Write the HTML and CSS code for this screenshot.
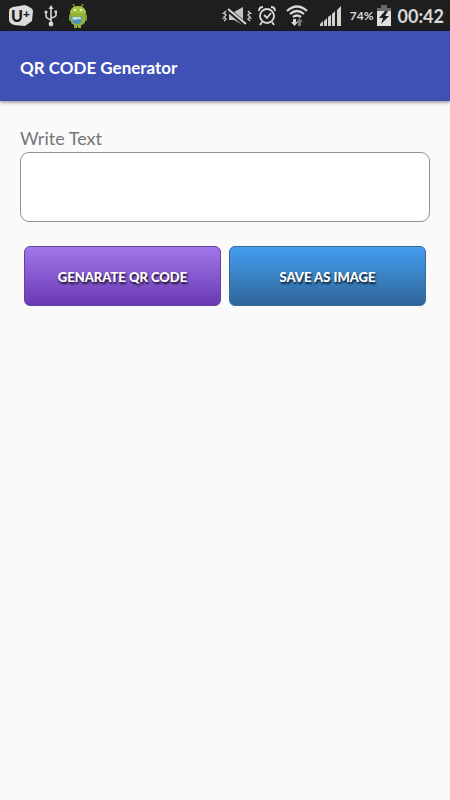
FILE: index.html
```html
<!DOCTYPE html>
<html lang="en">
<head>
<meta charset="utf-8">
<meta name="viewport" content="width=device-width, initial-scale=1">
<title>QR CODE Generator</title>
<link rel="stylesheet" href="styles.css">
</head>
<body>
<div class="status">
  <div class="status-group notices">
    <svg width="26" height="24" viewBox="0 0 26 24">
      <path d="M5 3L17 1Q25 4 25 7L24 17L17 22L6 21Q1 19 1 16L1 7Q1 4 5 3Z" fill="#dcdcda"/>
      <text x="3" y="18" class="logo">U<tspan dy="-4" class="logo-plus">+</tspan></text>
    </svg>
    <svg width="14" height="22" viewBox="0 0 14 22" fill="none" stroke="#d6d6d4" stroke-width="1.6">
      <path d="M7 3V19M2 7V11Q2 13 7 15M12 7V10Q12 12 7 13"/>
      <path d="M7 0L9.500 4H4.500ZM10.500 5.500H13V8H10.500Z" fill="#d6d6d4" stroke="none"/>
      <circle cx="2" cy="7" r="1.600" fill="#d6d6d4" stroke="none"/>
      <circle cx="7" cy="19" r="2.400" fill="#d6d6d4" stroke="none"/>
    </svg>
    <svg width="20" height="26" viewBox="0 0 20 26">
      <path d="M5 1L7 4M15 1L13 4" stroke="#9bb83c" stroke-width="1.200"/>
      <path d="M2 11Q2 3 10 3T18 11Z" fill="#a5c43f"/>
      <circle cx="7" cy="7" r="1" fill="#fff"/><circle cx="13" cy="7" r="1" fill="#fff"/>
      <rect x="1" y="11" width="3" height="7" rx="1.500" fill="#82a334"/>
      <rect x="16" y="11" width="3" height="7" rx="1.500" fill="#82a334"/>
      <path d="M3 10H17V19Q16 22 13 22V25H10V22L9 25H6V22Q3 21 3 19Z" fill="#91b23a"/>
      <path d="M3 13Q9 15 14 13L13 20Q9 22 5 20Z" fill="#4f91bd"/>
      <path d="M4 14L13 14V16L5 17Z" fill="#b9d9e8"/>
    </svg>
  </div>
  <div class="status-group">
    <svg class="mute" width="30" height="20" viewBox="0 0 30 20">
      <path d="M7 6H12L21 1V19L12 14H7Z" fill="#c4c4c2"/>
      <path d="M5 3L24 19" stroke="#1e1e1e" stroke-width="4.500"/>
      <path d="M6 3L24 18" stroke="#d8d8d6" stroke-width="2"/>
      <path d="M4 5L2 7L4 9L2 11L4 13L2 15M1 7V8M1 12V13M26 5L28 7L26 9L28 11L26 13L28 15M29 7V8M29 12V13" fill="none" stroke="#c4c4c2" stroke-width="1.500"/>
    </svg>
    <svg class="alarm" width="18" height="20" viewBox="0 0 18 20" fill="none" stroke="#d8d8d6" stroke-width="1.800">
      <circle cx="9" cy="10" r="7"/>
      <path d="M1 5Q1 1 5 1M13 1Q17 1 17 5M4 16L2 19M14 16L16 19M6 9L9 12L13 7"/>
    </svg>
    <svg class="wifi" width="22" height="22" viewBox="0 0 22 22" fill="none" stroke="#d8d8d6" stroke-width="2.200">
      <path d="M1 6Q11 -3 21 6M4 9Q11 3 18 9M7 12Q11 9 15 12"/>
      <path d="M7 14H10V17H12L8.500 21L5 17H7Z" fill="#d8d8d6" stroke="none"/>
      <path d="M12 21V17H10.500L13.500 13L17 17H15V21Z" fill="#777" stroke="none"/>
    </svg>
    <svg class="signal" width="22" height="20" viewBox="0 0 22 20" fill="#d2d2d0">
      <path d="M0 20V18L3 15V20ZM4 20V15L7 12V20ZM8 20V11L11 9V20ZM12 20V8L15 5V20ZM17 20V4L21 0V20Z"/>
    </svg>
    <span class="percent">74%</span>
    <svg class="battery" width="14" height="21" viewBox="0 0 14 21">
      <path d="M4 0H10V3H14V6H0V3H4Z" fill="#686868"/>
      <path d="M0 6H14V21H0Z" fill="#dededc"/>
      <path d="M8 6L2 13H6L4 19L12 11H8L11 6Z" fill="#1e1e1e"/>
    </svg>
    <span class="clock">00:42</span>
  </div>
</div>
<header class="bar"><h1>QR CODE Generator</h1></header>
<main>
  <label for="text">Write Text</label>
  <input id="text" type="text">
  <div class="actions">
    <button type="button" class="generate">GENARATE QR CODE</button>
    <button type="button" class="save">SAVE AS IMAGE</button>
  </div>
</main>
</body>
</html>
```
FILE: styles.css
```css
* { box-sizing: border-box; }
body {
  margin: 0;
  min-height: 100vh;
  background: #fafafa;
  font-family: Lato, "Liberation Sans", sans-serif;
}
.status {
  display: flex;
  align-items: center;
  justify-content: space-between;
  height: 31px;
  padding: 0 6px 0 8px;
  background: #1e1e1e;
  color: #dadad8;
}
.status-group { display: flex; align-items: center; }
.notices { gap: 10px; }
.logo { font: 900 16px Lato, sans-serif; fill: #1e1e1e; }
.logo-plus { font-size: 12px; }
.mute, .alarm { margin-right: 6px; }
.wifi { margin: 0 12px 0 4px; }
.signal { margin-right: 8px; }
.percent { font-size: 12px; font-weight: 700; line-height: 16px; margin-right: 3px; }
.battery { margin-right: 7px; }
.clock { font-size: 18px; font-weight: 700; line-height: 24px; }
.bar {
  display: flex;
  align-items: center;
  height: 70px;
  padding: 4px 20px 0;
  background: #3f51b5;
  box-shadow: 0 1px 4px rgba(0, 0, 0, 0.5);
}
h1 { margin: 0; font-size: 17px; line-height: 24px; font-weight: 700; color: #fff; }
main { padding: 25px 20px; }
label {
  display: block;
  padding-bottom: 2px;
  font-size: 18px;
  line-height: 24px;
  color: #757575;
}
input {
  display: block;
  width: 100%;
  height: 70px;
  padding: 8px 12px;
  border: 1px solid #929292;
  border-radius: 9px;
  background: #fff;
  font: inherit;
  font-size: 18px;
}
.actions { display: flex; gap: 8px; padding: 24px 4px; }
button {
  flex: 1;
  height: 60px;
  padding: 2px 0 0;
  border: 1px solid;
  border-radius: 6px;
  color: #fff;
  font: 900 13px Lato, "Liberation Sans", sans-serif;
  text-shadow: 1px 2px 2px rgba(0, 0, 0, 0.8);
}
.generate { border-color: #65439a; background: linear-gradient(#a276eb, #6a3ab2); }
.save { border-color: #356a99; background: linear-gradient(#449def, #2f6699); }
```
